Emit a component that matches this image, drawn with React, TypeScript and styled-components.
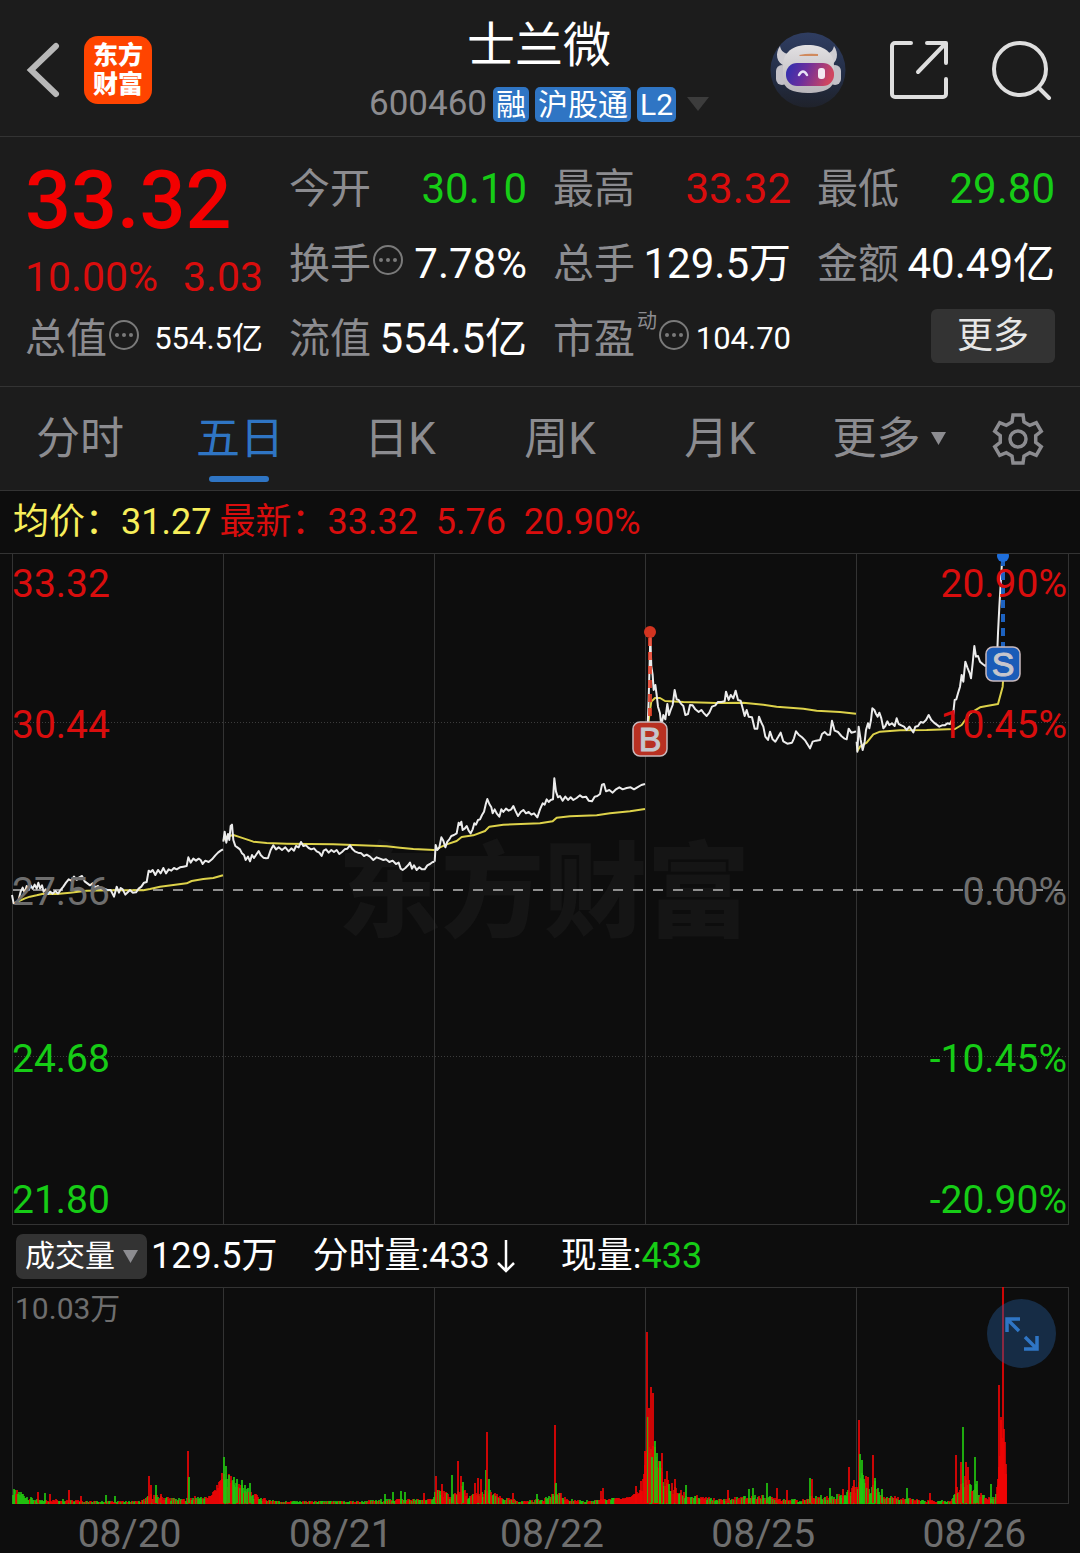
import React from 'react';
import styled, { createGlobalStyle } from 'styled-components';

const color = {
  panel: '#1c1c1c',
  page: '#0d0d0d',
  line: '#333333',
  muted: '#8c8c90',
  dim: '#6e6e6e',
  red: '#d90d0d',
  hot: '#f20000',
  green: '#16cc16',
  blue: '#2f75c4',
  yellow: '#f7ee5a',
  white: '#ffffff',
};

const GlobalStyle = createGlobalStyle`
  * { box-sizing: border-box; }
  body {
    margin: 0;
    background: ${color.page};
    color: ${color.white};
    font-family: Roboto, 'Noto Sans CJK SC', sans-serif;
  }
  button {
    border: 0;
    padding: 0;
    background: none;
    color: inherit;
    font: inherit;
    cursor: pointer;
  }
  svg { display: block; }
`;

/* ---------- header ---------- */

const Header = styled.header`
  display: grid;
  grid-template-columns: 1fr auto 1fr;
  align-items: center;
  height: 137px;
  padding: 3px 28px 0 26px;
  background: ${color.panel};
  border-bottom: 1px solid ${color.line};
`;

const HeaderSide = styled.div<{ $end?: boolean }>`
  display: flex;
  align-items: center;
  justify-content: ${(p) => (p.$end ? 'flex-end' : 'flex-start')};
  gap: ${(p) => (p.$end ? 44 : 24)}px;
`;

const Logo = styled.a`
  display: grid;
  place-content: center;
  width: 68px;
  height: 68px;
  border-radius: 14px;
  background: #ff4400;
  color: ${color.white};
  font-size: 25px;
  font-weight: 900;
  line-height: 29px;
  text-align: center;
  text-decoration: none;
`;

const TitleBlock = styled.div`
  display: flex;
  flex-direction: column;
  align-items: center;
  padding-top: 5px;
`;

const Title = styled.h1`
  margin: 0;
  font-size: 48px;
  font-weight: 400;
  line-height: 64px;
`;

const Subtitle = styled.div`
  display: flex;
  align-items: center;
  gap: 6px;
  height: 52px;
`;

const Code = styled.span`
  color: ${color.muted};
  font-size: 35px;
  line-height: 36px;
`;

const Tag = styled.span`
  padding: 0 3px;
  border-radius: 5px;
  background: ${color.blue};
  font-size: 30px;
  line-height: 35px;
`;

const SwitchStock = styled.button`
  padding-left: 5px;
`;

/* ---------- quote ---------- */

const Quote = styled.section`
  display: grid;
  grid-template-columns: repeat(4, 1fr);
  grid-auto-rows: 75px;
  column-gap: 26px;
  padding: 14px 25px 10px;
  background: ${color.panel};
  border-bottom: 1px solid ${color.line};
`;

const PriceCell = styled.div`
  grid-row: span 2;
  display: flex;
  flex-direction: column;
  color: ${color.hot};
`;

const Price = styled.strong`
  font-size: 81px;
  font-weight: 500;
  line-height: 100px;
`;

const Change = styled.div`
  display: flex;
  justify-content: space-between;
  color: ${color.red};
  font-size: 41px;
  line-height: 52px;
`;

const Cell = styled.div`
  display: flex;
  align-items: center;
  line-height: 52px;
  white-space: nowrap;
`;

const CellLabel = styled.span`
  color: ${color.muted};
  font-size: 41px;
`;

const CellValue = styled.span<{ $tone?: string; $small?: boolean }>`
  margin-left: auto;
  color: ${(p) => p.$tone ?? color.white};
  font-size: ${(p) => (p.$small ? 31 : 42)}px;
`;

const Sup = styled.sup`
  align-self: flex-start;
  margin-left: 2px;
  color: ${color.muted};
  font-size: 20px;
  line-height: 40px;
`;

const MoreButton = styled.button`
  align-self: center;
  justify-self: end;
  width: 124px;
  height: 54px;
  margin-bottom: 6px;
  border-radius: 6px;
  background: #333333;
  color: #e6e6e6;
  font-size: 36px;
  line-height: 54px;
`;

/* ---------- tabs ---------- */

const Tabs = styled.nav`
  display: grid;
  grid-template-columns: repeat(5, 160fr) 178fr 80fr;
  height: 104px;
  padding-right: 22px;
  background: ${color.panel};
  border-bottom: 1px solid ${color.line};
`;

const Tab = styled.button<{ $active?: boolean }>`
  position: relative;
  display: flex;
  align-items: center;
  justify-content: center;
  gap: 10px;
  color: ${(p) => (p.$active ? color.blue : color.muted)};
  font-size: 44px;
  line-height: 52px;

  &::after {
    content: '';
    display: ${(p) => (p.$active ? 'block' : 'none')};
    position: absolute;
    bottom: 8px;
    left: calc(50% - 31px);
    width: 60px;
    height: 6px;
    border-radius: 3px;
    background: ${color.blue};
  }
`;

/* ---------- charts ---------- */

const Legend = styled.div`
  display: flex;
  align-items: center;
  gap: 8px;
  height: 63px;
  padding-left: 13px;
  border-bottom: 1px solid ${color.line};
  font-size: 36px;
  line-height: 44px;
  white-space: pre;
`;

const Tone = styled.span<{ $tone: string }>`
  color: ${(p) => p.$tone};
`;

const ChartBox = styled.section`
  position: relative;

  > svg {
    width: 100%;
    height: auto;
  }
`;

const AxisLabel = styled.span<{ $top: number; $right?: boolean; $tone: string }>`
  position: absolute;
  top: ${(p) => p.$top}%;
  ${(p) => (p.$right ? 'right: 13px;' : 'left: 12px;')}
  transform: translateY(-50%);
  color: ${(p) => p.$tone};
  font-size: 39px;
  line-height: 46px;
`;

const VolumeBar = styled.div`
  display: flex;
  align-items: center;
  height: 62px;
  padding-left: 16px;
  font-size: 36px;
  line-height: 44px;
`;

const Indicator = styled.button`
  display: flex;
  align-items: center;
  justify-content: center;
  gap: 8px;
  width: 131px;
  height: 45px;
  margin-right: 4px;
  border-radius: 7px;
  background: #333333;
  font-size: 30px;
  line-height: 44px;
`;

const VolumeItem = styled.span`
  display: flex;
  align-items: center;
  gap: 6px;
  margin-right: 35px;
`;

const VolumeMax = styled.span`
  position: absolute;
  top: 4px;
  left: 15px;
  color: ${color.dim};
  font-size: 30px;
  line-height: 36px;
`;

const Expand = styled.button`
  position: absolute;
  top: 12px;
  right: 24px;
  display: grid;
  place-items: center;
  width: 69px;
  height: 69px;
  border-radius: 50%;
  background: rgba(38, 92, 154, 0.4);
`;

const Dates = styled.div`
  display: grid;
  grid-template-columns: repeat(5, 1fr);
  padding: 12px 0 0 24px;
  color: ${color.dim};
  font-size: 39px;
  line-height: 36px;
  text-align: center;
`;

/* ---------- icons ---------- */

const BackIcon = () => (
  <svg width="34" height="56" viewBox="0 0 34 56" fill="none" stroke="#b8b8b8" strokeWidth="6" strokeLinecap="round">
    <path d="M30 4 5 28l25 24" strokeLinejoin="miter" />
  </svg>
);

const ShareIcon = () => (
  <svg width="58" height="58" viewBox="0 0 58 58" fill="none" stroke="#dedede" strokeWidth="4" strokeLinecap="round" strokeLinejoin="round">
    <path d="M21 2H5a3 3 0 0 0-3 3v48a3 3 0 0 0 3 3h48a3 3 0 0 0 3-3V38" />
    <path d="M37 2h19v20M55 3 28 31" />
  </svg>
);

const SearchIcon = () => (
  <svg width="60" height="60" viewBox="0 0 60 60" fill="none" stroke="#dedede" strokeWidth="4" strokeLinecap="round">
    <circle cx="28" cy="29" r="26" />
    <path d="m47 48 10 10" />
  </svg>
);

const Avatar = () => (
  <svg width="76" height="76" viewBox="0 0 76 76">
    <defs>
      <linearGradient id="sky" x1="0" y1="0" x2="0" y2="1">
        <stop offset="0" stopColor="#2f3d61" />
        <stop offset="0.6" stopColor="#232d44" />
        <stop offset="1" stopColor="#1f222b" />
      </linearGradient>
      <linearGradient id="visor" x1="0" y1="0" x2="1" y2="0.2">
        <stop offset="0" stopColor="#2b2fb0" />
        <stop offset="0.45" stopColor="#6a2f9e" />
        <stop offset="1" stopColor="#cf4560" />
      </linearGradient>
      <linearGradient id="shell" x1="0" y1="0" x2="0" y2="1">
        <stop offset="0" stopColor="#e2e0e2" />
        <stop offset="1" stopColor="#b9b6bb" />
      </linearGradient>
    </defs>
    <circle cx="38" cy="38" r="37.5" fill="url(#sky)" />
    <path d="M10 14c-5 7-4 17 5 20l9-12c-8 1-13-2-14-8zM64 14c5 7 4 17-5 20l-9-12c8 1 13-2 14-8z" fill="#cfcdd2" />
    <rect x="6" y="33" width="12" height="20" rx="6" fill="#c3c1c8" />
    <rect x="59" y="33" width="12" height="20" rx="6" fill="#c3c1c8" />
    <path d="M13 34c0-14 10-21 25-21s26 7 26 21v13c0 9-10 14-26 14s-25-5-25-14z" fill="url(#shell)" />
    <rect x="16" y="31" width="48" height="23" rx="11" fill="url(#visor)" />
    <path d="M29 23q9-2 19-1v2H30z" fill="#d08a5e" />
    <path d="M29 43q4-7 8 0" fill="none" stroke="#e8e4f5" strokeWidth="2.500" strokeLinecap="round" />
    <rect x="48" y="36" width="7" height="11" rx="3" fill="#f3e9f2" />
  </svg>
);

const DotsIcon = () => (
  <svg width="32" height="32" viewBox="0 0 32 32" fill="#7a7a7a">
    <circle cx="17" cy="16" r="14" fill="none" stroke="#7a7a7a" strokeWidth="2" />
    <circle cx="10" cy="16" r="2" />
    <circle cx="17" cy="16" r="2" />
    <circle cx="24" cy="16" r="2" />
  </svg>
);

const InfoMark = styled.span`
  padding-bottom: 8px;
`;

const Triangle = ({ w, h, fill }: { w: number; h: number; fill: string }) => (
  <svg width={w} height={h} viewBox="0 0 10 10" preserveAspectRatio="none">
    <path d="M0 0h10L5 10z" fill={fill} />
  </svg>
);

const gearPath = (() => {
  const tooth = [[-6, -17], [-5, -24], [5, -24], [6, -17]];
  const pts: string[] = [];
  for (let i = 0; i < 6; i++) {
    const a = (i * Math.PI) / 3;
    tooth.forEach(([x, y]) => {
      pts.push(`${(x * Math.cos(a) - y * Math.sin(a)).toFixed(2)} ${(x * Math.sin(a) + y * Math.cos(a)).toFixed(2)}`);
    });
  }
  return `M${pts.join('L')}Z`;
})();

const GearIcon = () => (
  <svg width="52" height="52" viewBox="-26 -26 52 52" fill="none" stroke={color.muted} strokeWidth="3.500">
    <path d={gearPath} />
    <circle r="8" />
  </svg>
);

const DownArrow = () => (
  <svg width="30" height="34" viewBox="0 0 30 34" fill="none" stroke="#fff" strokeWidth="2.500">
    <path d="M10 1v31M2 24l8 8 8-8" />
  </svg>
);

const ExpandIcon = () => (
  <svg width="34" height="34" viewBox="0 0 34 34" fill="none" stroke={color.blue} strokeWidth="3.500">
    <path d="M15 2H2v13M2 2l12 12M19 32h13V19M32 32 20 20" />
  </svg>
);

/* ---------- chart data ---------- */

type Session = { shift: [number, number]; price: string; average: string };

/* Coordinates are in thirds of a chart unit, relative to the session's shift. */
const sessions: Session[] = [
  {
    shift: [0, 186],
    price:
      '36,465 41,490 48,488 55,482 62,455 68,443 74,458 80,438 86,450 92,436 98,446 104,434 110,446 115,428 120,445 126,436 131,455 137,448 144,462 150,455 158,461 166,453 174,461 182,450 190,440 198,428 206,418 214,422 222,410 230,420 238,412 246,408 254,424 262,430 270,436 278,430 286,442 294,438 302,446 312,446 322,450 332,450 342,470 350,440 357,458 362,444 368,448 376,464 384,456 390,450 398,458 408,457 416,446 424,440 432,428 440,426 446,392 452,396 458,390 466,405 474,390 482,400 490,384 498,400 506,388 514,392 522,384 530,388 540,382 550,380 560,378 565,352 572,368 580,356 588,362 596,356 602,360 608,372 616,362 626,366 636,358 646,346 654,338 662,332 669,328',
    average:
      '41,490 60,482 75,475 90,470 110,466 130,461 170,462 210,458 260,452 330,451 430,451 450,447 480,440 520,435 560,430 575,423 610,417 640,414 669,406',
  },
  {
    shift: [0, 186],
    price:
      '670,305 674,275 679,308 684,282 688,300 692,258 696,254 700,300 706,318 712,322 720,328 726,340 732,345 737,360 744,350 750,364 756,345 762,354 768,345 776,333 782,345 790,353 798,355 804,354 812,330 820,316 828,328 836,322 846,330 856,322 866,334 874,325 882,332 888,318 896,322 903,306 910,318 918,316 926,324 934,328 942,325 950,334 958,338 965,348 971,332 978,328 986,338 994,330 1002,336 1010,330 1018,342 1026,336 1034,328 1042,326 1050,316 1058,328 1066,335 1074,338 1084,340 1092,348 1100,344 1110,350 1120,360 1130,352 1140,356 1150,360 1158,358 1168,366 1178,362 1188,372 1196,368 1202,386 1208,390 1216,384 1224,376 1230,368 1236,386 1242,376 1250,390 1258,382 1266,388 1274,388 1282,376 1290,372 1298,366 1303,366',
    average:
      '670,300 680,290 700,285 715,290 740,298 760,305 800,309 860,311 1000,313 1080,316 1160,319 1200,323 1240,327 1303,330',
  },
  {
    shift: [430, 46],
    price:
      '14,785 17,735 22,750 28,742 34,712 40,722 46,742 52,725 58,718 64,708 72,705 80,700 86,668 90,675 94,665 98,690 104,686 110,678 116,692 122,700 128,688 133,670 138,674 144,660 150,658 156,645 162,635 168,610 172,597 178,612 184,622 188,640 194,628 200,640 208,650 214,628 220,636 228,626 236,632 244,628 250,618 256,632 264,648 272,636 280,630 288,640 296,636 304,644 312,640 322,652 330,628 338,610 344,614 350,598 356,606 362,600 369,598 373,535 378,575 384,592 390,588 398,602 406,590 414,600 422,592 430,600 440,594 450,586 458,592 468,590 476,602 486,604 494,590 502,588 510,582 516,554 522,552 528,574 538,570 548,578 558,568 568,562 578,568 590,564 602,562 612,568 622,562 634,555 645,552',
    average:
      '14,752 30,742 50,733 80,723 95,711 130,706 165,693 178,680 220,674 330,670 368,664 380,653 420,649 500,646 540,640 600,634 645,627',
  },
  {
    shift: [430, 46],
    price:
      '648,415 652,400 656,300 661,110 664,200 668,225 671,270 676,255 680,285 684,320 690,340 694,378 700,345 706,358 712,312 717,345 722,330 728,315 734,270 740,298 746,300 752,310 760,318 766,345 774,342 780,315 788,316 796,328 806,336 814,330 822,340 830,348 838,338 846,320 856,316 864,306 874,306 884,304 888,275 896,300 902,285 910,295 917,272 924,300 932,302 938,325 944,348 950,330 956,350 966,352 974,386 982,386 987,350 994,368 1000,380 1006,410 1014,420 1020,395 1028,418 1036,425 1044,412 1052,398 1060,424 1072,431 1086,428 1092,415 1098,394 1106,404 1116,412 1126,422 1132,432 1140,445 1148,425 1158,422 1170,420 1176,402 1184,396 1192,404 1200,404 1206,362 1214,392 1224,396 1234,408 1244,416 1250,418 1256,386 1264,398 1272,396 1278,394',
    average:
      '652,400 658,345 664,305 675,294 690,294 705,303 760,306 860,309 940,308 1000,314 1040,320 1120,326 1160,332 1230,336 1278,341',
  },
  {
    shift: [840, -4],
    price:
      '50,575 52,605 56,530 62,570 68,600 74,575 78,540 84,520 88,535 93,510 97,475 103,480 108,492 113,500 118,488 124,505 130,535 136,528 142,514 148,525 156,520 164,528 170,505 176,522 184,526 192,530 200,540 208,530 215,540 220,547 226,530 234,528 242,516 250,518 258,510 266,495 274,510 282,518 290,524 298,530 306,526 314,526 322,520 330,522 338,505 344,450 349,448 354,430 360,410 365,375 370,395 376,335 382,352 390,372 393,385 398,340 403,288 408,320 414,318 420,335 428,342 436,348 442,340 448,355 452,375 458,352 464,355 470,350 474,250 478,170 484,70 487,20',
    average:
      '52,603 60,590 80,578 100,553 120,545 180,541 260,540 345,537 365,525 390,490 420,472 440,468 474,462 488,410 490,380 500,370',
  },
];

/* Typical bar height by horizontal position. */
const volumeBase: [number, number][] = [
  [12, 14], [20, 13], [28, 7], [40, 4], [70, 5], [90, 3], [140, 3], [150, 10], [160, 8], [180, 5], [200, 8], [207, 6],
  [215, 15], [222, 28], [226, 32], [232, 26], [242, 20], [252, 10], [262, 6], [280, 3], [345, 3], [360, 3], [390, 5],
  [430, 5], [436, 16], [444, 12], [450, 8], [460, 18], [468, 8], [478, 12], [488, 14], [500, 7], [520, 3], [530, 4],
  [545, 7], [558, 12], [566, 5], [590, 3], [610, 6], [630, 7], [641, 15], [646, 60], [652, 60], [657, 45], [664, 28],
  [672, 18], [685, 10], [700, 7], [720, 5], [740, 7], [755, 9], [766, 8], [780, 6], [800, 4], [812, 8], [830, 8],
  [846, 12], [856, 22], [862, 38], [867, 18], [874, 22], [882, 10], [900, 7], [920, 4], [950, 3], [958, 20], [965, 28],
  [974, 20], [982, 9], [992, 6], [997, 20], [1000, 80], [1004, 70], [1006, 25],
];

/* Single trades that stand out: position, height, 1 for a rising minute. */
const volumePeaks: [number, number, 0 | 1][] = [
  [37, 11, 1], [44, 10, 0], [49, 9, 1], [68, 13, 1], [80, 7, 1], [105, 8, 0], [114, 7, 0], [148, 27, 1], [150, 18, 1],
  [155, 18, 0], [160, 9, 1], [187, 52, 1], [188, 26, 0], [219, 22, 1], [221, 30, 1], [223, 46, 0], [225, 37, 0],
  [228, 28, 0], [233, 26, 0], [236, 24, 0], [241, 23, 0], [244, 18, 0], [249, 20, 0], [384, 9, 0], [392, 11, 0],
  [400, 12, 0], [404, 11, 0], [423, 10, 1], [435, 27, 1], [441, 19, 1], [451, 28, 0], [457, 42, 1], [460, 27, 1],
  [462, 21, 0], [474, 20, 1], [477, 25, 1], [480, 24, 1], [485, 33, 0], [486, 71, 1], [488, 24, 0], [512, 10, 1],
  [536, 9, 0], [554, 78, 1], [555, 20, 0], [600, 12, 1], [602, 15, 1], [635, 17, 1], [640, 22, 1], [644, 52, 1],
  [646, 171, 1], [647, 86, 0], [648, 95, 1], [650, 116, 1], [652, 110, 1], [651, 46, 0], [654, 62, 0], [656, 50, 0],
  [659, 42, 0], [661, 50, 1], [666, 32, 1], [674, 24, 1], [685, 18, 0], [727, 13, 1], [748, 14, 0], [752, 15, 0],
  [766, 20, 0], [776, 15, 1], [786, 13, 1], [809, 25, 0], [811, 24, 1], [829, 15, 0], [842, 14, 1], [848, 36, 1],
  [853, 23, 1], [858, 83, 1], [859, 49, 0], [861, 43, 0], [867, 26, 1], [872, 48, 1], [874, 25, 0], [881, 14, 0],
  [906, 15, 0], [929, 10, 1], [955, 48, 1], [960, 41, 1], [962, 76, 0], [965, 41, 1], [967, 36, 1], [974, 46, 0],
  [976, 22, 0], [990, 19, 0], [997, 24, 1], [998, 118, 1], [1000, 83, 1], [1002, 216, 1], [1004, 29, 1], [1005, 29, 1],
];

const baseAt = (x: number) => {
  const i = Math.max(1, volumeBase.findIndex(([px]) => px >= x));
  const [x0, y0] = volumeBase[i - 1];
  const [x1, y1] = volumeBase[i];
  return y0 + ((y1 - y0) * (x - x0)) / (x1 - x0);
};

const redZones = [[205, 223], [255, 257], [395, 399], [598, 604], [614, 648], [996, 1007]];
const noise = (n: number) => {
  const v = Math.sin(n * 12.9898) * 43758.5453;
  return v - Math.floor(v);
};

const bars = Array.from({ length: 994 }, (_, i) => {
  const x = 12 + i;
  const solid = redZones.some(([a, b]) => x >= a && x <= b);
  const height = Math.max(2, Math.round(baseAt(x) * (solid ? 0.8 + noise(x) * 0.3 : 0.5 + noise(x) * 0.6)));
  const rising = solid || noise(x * 3 + 7) > 0.5;
  return { x, height, rising };
});

const gridX = [12, 223, 434, 645, 856, 1068];
const barRed = '#ee0505';
const barGreen = '#22c70f';

const axis = [
  { top: 4.4, price: '33.32', pct: '20.90%', tone: color.red },
  { top: 25.5, price: '30.44', pct: '10.45%', tone: color.red },
  { top: 50.3, price: '27.56', pct: '0.00%', tone: color.dim },
  { top: 75.2, price: '24.68', pct: '-10.45%', tone: color.green },
  { top: 96.2, price: '21.80', pct: '-20.90%', tone: color.green },
];

const Marker = ({ x, y, fill, letter }: { x: number; y: number; fill: string; letter: string }) => (
  <g>
    <rect x={x - 17} y={y - 17} width="34" height="34" rx="7" fill={fill} stroke="#c9b9bd" strokeWidth="1.500" />
    <text x={x} y={y + 12} fill="#c6c6cc" fontSize="34" fontFamily="Liberation Sans, sans-serif" stroke="#c6c6cc" textAnchor="middle">
      {letter}
    </text>
  </g>
);

const PriceChart = () => (
  <ChartBox aria-label="五日走势">
    <svg viewBox="0 0 1080 671">
      <text x="544" y="375" fill="#151515" fontSize="103" fontWeight="900" textAnchor="middle">
        东方财富
      </text>
      <g stroke={color.line} shapeRendering="crispEdges">
        {gridX.map((x) => (
          <path key={x} d={`M${x + 0.5} 0V670`} />
        ))}
        <path d="M12 670.500H1069" />
        <path d="M12 168.500H1069M12 502.500H1069" strokeDasharray="1 2" stroke="#3c3c3c" />
      </g>
      <path d="M13 336H1068" stroke="#8f8f8f" strokeWidth="2" strokeDasharray="10 10" />
      {sessions.map(({ shift, price, average }, i) => (
        <g key={i} transform={`translate(${shift[0]} ${shift[1]}) scale(0.33333)`} fill="none" strokeLinejoin="round">
          <polyline points={average} stroke="#ddd24a" strokeWidth="6" />
          <polyline points={price} stroke="#ececec" strokeWidth="6" />
        </g>
      ))}
      <path d="M650 84V168" stroke="#e8402a" strokeWidth="4" strokeDasharray="8 6" opacity="0.85" />
      <circle cx="650" cy="78" r="6" fill="#d23420" />
      <Marker x={650} y={185} fill="#b83022" letter="B" />
      <path d="M1003 4V94" stroke="#1d62c0" strokeWidth="4" strokeDasharray="8 6" />
      <circle cx="1003" cy="2" r="6" fill="#1f6fdc" />
      <Marker x={1003} y={110} fill="#1a5cb8" letter="S" />
    </svg>
    {axis.map((a) => (
      <React.Fragment key={a.price}>
        <AxisLabel $top={a.top} $tone={a.tone}>{a.price}</AxisLabel>
        <AxisLabel $top={a.top} $tone={a.tone} $right>{a.pct}</AxisLabel>
      </React.Fragment>
    ))}
  </ChartBox>
);

const VolumeChart = () => (
  <ChartBox aria-label="成交量">
    <svg viewBox="0 0 1080 217">
      <g stroke={color.line} shapeRendering="crispEdges">
        {gridX.map((x) => (
          <path key={x} d={`M${x + 0.5} 0V216`} />
        ))}
        <path d="M12 0.500H1069M12 216.500H1069" />
      </g>
      <g shapeRendering="crispEdges">
        {bars.map((b) => (
          <rect key={b.x} x={b.x} y={217 - b.height} width="2" height={b.height} fill={b.rising ? barRed : barGreen} opacity="0.8" />
        ))}
        {volumePeaks.map(([x, h, up]) => (
          <rect key={x} x={x} y={216 - h} width="2" height={h} fill={up ? barRed : barGreen} opacity="0.85" />
        ))}
      </g>
    </svg>
    <VolumeMax>10.03万</VolumeMax>
    <Expand aria-label="全屏">
      <ExpandIcon />
    </Expand>
  </ChartBox>
);

/* ---------- page ---------- */

type Stat = { label: string; value: string; tone?: string; info?: boolean; small?: boolean; sup?: string };

const stats: Stat[] = [
  { label: '今开', value: '30.10', tone: color.green },
  { label: '最高', value: '33.32', tone: color.red },
  { label: '最低', value: '29.80', tone: color.green },
  { label: '换手', value: '7.78%', info: true },
  { label: '总手', value: '129.5万' },
  { label: '金额', value: '40.49亿' },
  { label: '总值', value: '554.5亿', info: true, small: true },
  { label: '流值', value: '554.5亿' },
  { label: '市盈', value: '104.70', info: true, small: true, sup: '动' },
];

export default function App() {
  return (
    <>
      <GlobalStyle />
      <Header>
        <HeaderSide>
          <button aria-label="返回"><BackIcon /></button>
          <Logo href="#">东方<br />财富</Logo>
        </HeaderSide>
        <TitleBlock>
          <Title>士兰微</Title>
          <Subtitle>
            <Code>600460</Code>
            <Tag>融</Tag>
            <Tag>沪股通</Tag>
            <Tag>L2</Tag>
            <SwitchStock aria-label="切换"><Triangle w={22} h={14} fill="#3c3c3c" /></SwitchStock>
          </Subtitle>
        </TitleBlock>
        <HeaderSide $end>
          <button aria-label="助手"><Avatar /></button>
          <button aria-label="分享"><ShareIcon /></button>
          <button aria-label="搜索"><SearchIcon /></button>
        </HeaderSide>
      </Header>

      <Quote>
        <PriceCell>
          <Price>33.32</Price>
          <Change><span>10.00%</span><span>3.03</span></Change>
        </PriceCell>
        {stats.map((s, i) => (
          <Cell key={i}>
            <CellLabel>{s.label}</CellLabel>
            {s.sup && <Sup>{s.sup}</Sup>}
            {s.info && <InfoMark><DotsIcon /></InfoMark>}
            <CellValue $tone={s.tone} $small={s.small}>{s.value}</CellValue>
          </Cell>
        ))}
        <MoreButton>更多</MoreButton>
      </Quote>

      <Tabs>
        <Tab>分时</Tab>
        <Tab $active>五日</Tab>
        <Tab>日K</Tab>
        <Tab>周K</Tab>
        <Tab>月K</Tab>
        <Tab>更多<Triangle w={15} h={13} fill={color.muted} /></Tab>
        <Tab aria-label="设置"><GearIcon /></Tab>
      </Tabs>

      <Legend>
        <Tone $tone={color.yellow}>均价：31.27</Tone>
        <Tone $tone={color.red}>最新：33.32  5.76  20.90%</Tone>
      </Legend>

      <PriceChart />

      <VolumeBar>
        <Indicator>成交量<Triangle w={15} h={13} fill={color.muted} /></Indicator>
        <VolumeItem>129.5万</VolumeItem>
        <VolumeItem>分时量:433<DownArrow /></VolumeItem>
        <VolumeItem>
          <span>现量:<Tone $tone={color.green}>433</Tone></span>
        </VolumeItem>
      </VolumeBar>

      <VolumeChart />

      <Dates>
        {['08/20', '08/21', '08/22', '08/25', '08/26'].map((d) => (
          <time key={d}>{d}</time>
        ))}
      </Dates>
    </>
  );
}
